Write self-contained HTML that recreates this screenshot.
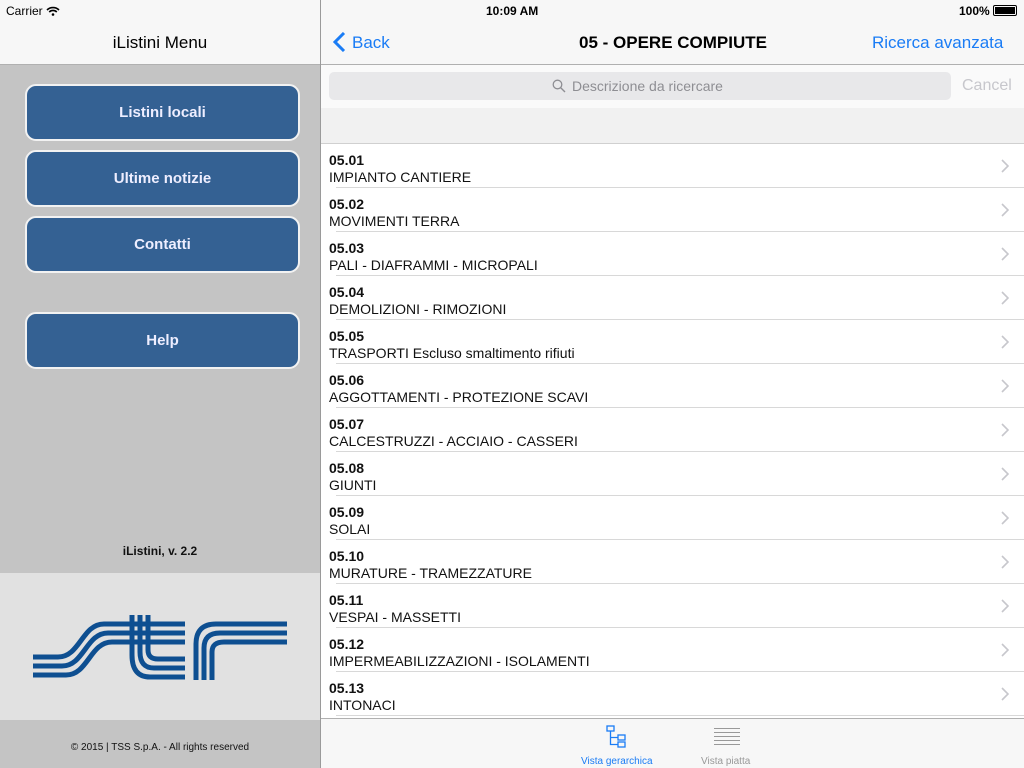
<!DOCTYPE html><html><head><style>
*{margin:0;padding:0;box-sizing:border-box}
body{width:1024px;height:768px;position:relative;overflow:hidden;font-family:"Liberation Sans",sans-serif;background:#fff}
.abs{position:absolute}
.btn{position:absolute;left:25px;width:275px;height:57px;background:#346193;border:2px solid #f2f2f2;border-radius:11px;color:#eef;font-weight:bold;font-size:15px;text-align:center;line-height:54px}
.row{position:absolute;left:320px;width:704px;height:44px}
.row b{position:absolute;left:9px;top:8px;font-size:14px;color:#111}
.row span{position:absolute;left:9px;top:25px;font-size:14px;color:#111}
.row i{position:absolute;left:16px;right:0;bottom:0;height:1px;background:#d8d8d8}
.row svg{position:absolute;right:15px;top:15px}
</style></head><body>
<div class="abs" style="left:0;top:0;width:320px;height:65px;background:#f7f7f7;border-bottom:1px solid #b0b0b0"></div>
<div class="abs" style="left:6px;top:4px;font-size:12px;color:#000">Carrier <svg width="14" height="10" viewBox="0 0 14 10" style="vertical-align:-1px"><path d="M1 4a8.5 8.5 0 0 1 12 0M3.2 6a5.5 5.5 0 0 1 7.6 0" stroke="#000" stroke-width="1.6" fill="none"/><circle cx="7" cy="8.5" r="1.3"/></svg></div>
<div class="abs" style="left:0;width:320px;top:33px;text-align:center;font-size:17px;color:#000">iListini Menu</div>
<div class="abs" style="left:0;top:65px;width:320px;height:508px;background:#c4c4c4"></div>
<div class="btn" style="top:84px">Listini locali</div>
<div class="btn" style="top:150px">Ultime notizie</div>
<div class="btn" style="top:216px">Contatti</div>
<div class="btn" style="top:312px">Help</div>
<div class="abs" style="left:0;width:320px;top:544px;text-align:center;font-size:12px;font-weight:bold;color:#111">iListini, v. 2.2</div>
<div class="abs" style="left:0;top:573px;width:320px;height:147px;background:#e1e1e1"></div>
<svg class="abs" style="left:0;top:573px" width="320" height="147" viewBox="0 573 320 147">
<g stroke="#0e4f91" stroke-width="5" fill="none">
<path d="M33 657H58C80 657 82 624 104 624H185"/>
<path d="M33 666H62C84 666 86 633 108 633H185"/>
<path d="M33 675H66C88 675 90 642 112 642H185"/>
<path d="M132 615V655Q132 677 150 677H185"/>
<path d="M140 615V652Q140 668 154 668H185"/>
<path d="M148 615V650Q148 659 158 659H185"/>
<path d="M196 680V644Q196 624 216 624H287"/>
<path d="M204 680V648Q204 633 220 633H287"/>
<path d="M212 680V652Q212 642 224 642H287"/>
</g></svg>
<div class="abs" style="left:0;top:720px;width:320px;height:48px;background:#c4c4c4"></div>
<div class="abs" style="left:0;width:320px;top:742px;text-align:center;font-size:10px;color:#111">© 2015 | TSS S.p.A. - All rights reserved</div>
<div class="abs" style="left:320px;top:0;width:1px;height:768px;background:#9a9a9a"></div>
<div class="abs" style="left:321px;top:0;width:703px;height:65px;background:#f7f7f7;border-bottom:1px solid #b0b0b0"></div>
<div class="abs" style="left:486px;top:4px;font-size:12px;font-weight:bold">10:09 AM</div>
<div class="abs" style="left:959px;top:4px;font-size:12px;font-weight:bold">100% <span style="display:inline-block;width:24px;height:11px;border:1px solid #000;border-radius:2px;padding:1px;vertical-align:-1px"><span style="display:block;height:100%;background:#000"></span></span></div>
<svg class="abs" style="left:333px;top:32px" width="14" height="20"><path d="M11 1L2 10l9 9" stroke="#1a7cf5" stroke-width="3" fill="none"/></svg>
<div class="abs" style="left:352px;top:33px;font-size:17px;color:#1a7cf5">Back</div>
<div class="abs" style="left:579px;top:33px;font-size:17px;font-weight:bold">05 - OPERE COMPIUTE</div>
<div class="abs" style="left:872px;top:33px;font-size:17px;color:#1a7cf5">Ricerca avanzata</div>
<div class="abs" style="left:321px;top:65px;width:703px;height:43px;background:#fafafa"></div>
<div class="abs" style="left:329px;top:72px;width:622px;height:28px;background:#e8e8ea;border-radius:5px"></div>
<svg class="abs" style="left:552px;top:79px" width="14" height="14"><circle cx="5.5" cy="5.5" r="4.3" stroke="#8e8e93" stroke-width="1.3" fill="none"/><path d="M8.6 8.6L13 13" stroke="#8e8e93" stroke-width="1.4"/></svg>
<div class="abs" style="left:572px;top:78px;font-size:14px;color:#8e8e93">Descrizione da ricercare</div>
<div class="abs" style="left:962px;top:77px;font-size:16px;color:#c7c7cc">Cancel</div>
<div class="abs" style="left:321px;top:108px;width:703px;height:36px;background:#f1f1f1;border-bottom:1px solid #d0d0d0"></div>
<div class="row" style="top:144px"><b>05.01</b><span>IMPIANTO CANTIERE</span><i></i><svg width="8" height="14"><path d="M1 1l6 6-6 6" stroke="#c7c7cc" stroke-width="1.6" fill="none"/></svg></div>
<div class="row" style="top:188px"><b>05.02</b><span>MOVIMENTI TERRA</span><i></i><svg width="8" height="14"><path d="M1 1l6 6-6 6" stroke="#c7c7cc" stroke-width="1.6" fill="none"/></svg></div>
<div class="row" style="top:232px"><b>05.03</b><span>PALI - DIAFRAMMI - MICROPALI</span><i></i><svg width="8" height="14"><path d="M1 1l6 6-6 6" stroke="#c7c7cc" stroke-width="1.6" fill="none"/></svg></div>
<div class="row" style="top:276px"><b>05.04</b><span>DEMOLIZIONI - RIMOZIONI</span><i></i><svg width="8" height="14"><path d="M1 1l6 6-6 6" stroke="#c7c7cc" stroke-width="1.6" fill="none"/></svg></div>
<div class="row" style="top:320px"><b>05.05</b><span>TRASPORTI Escluso smaltimento rifiuti</span><i></i><svg width="8" height="14"><path d="M1 1l6 6-6 6" stroke="#c7c7cc" stroke-width="1.6" fill="none"/></svg></div>
<div class="row" style="top:364px"><b>05.06</b><span>AGGOTTAMENTI - PROTEZIONE SCAVI</span><i></i><svg width="8" height="14"><path d="M1 1l6 6-6 6" stroke="#c7c7cc" stroke-width="1.6" fill="none"/></svg></div>
<div class="row" style="top:408px"><b>05.07</b><span>CALCESTRUZZI - ACCIAIO - CASSERI</span><i></i><svg width="8" height="14"><path d="M1 1l6 6-6 6" stroke="#c7c7cc" stroke-width="1.6" fill="none"/></svg></div>
<div class="row" style="top:452px"><b>05.08</b><span>GIUNTI</span><i></i><svg width="8" height="14"><path d="M1 1l6 6-6 6" stroke="#c7c7cc" stroke-width="1.6" fill="none"/></svg></div>
<div class="row" style="top:496px"><b>05.09</b><span>SOLAI</span><i></i><svg width="8" height="14"><path d="M1 1l6 6-6 6" stroke="#c7c7cc" stroke-width="1.6" fill="none"/></svg></div>
<div class="row" style="top:540px"><b>05.10</b><span>MURATURE - TRAMEZZATURE</span><i></i><svg width="8" height="14"><path d="M1 1l6 6-6 6" stroke="#c7c7cc" stroke-width="1.6" fill="none"/></svg></div>
<div class="row" style="top:584px"><b>05.11</b><span>VESPAI - MASSETTI</span><i></i><svg width="8" height="14"><path d="M1 1l6 6-6 6" stroke="#c7c7cc" stroke-width="1.6" fill="none"/></svg></div>
<div class="row" style="top:628px"><b>05.12</b><span>IMPERMEABILIZZAZIONI - ISOLAMENTI</span><i></i><svg width="8" height="14"><path d="M1 1l6 6-6 6" stroke="#c7c7cc" stroke-width="1.6" fill="none"/></svg></div>
<div class="row" style="top:672px"><b>05.13</b><span>INTONACI</span><i></i><svg width="8" height="14"><path d="M1 1l6 6-6 6" stroke="#c7c7cc" stroke-width="1.6" fill="none"/></svg></div>
<div class="abs" style="left:321px;top:718px;width:703px;height:50px;background:#f7f7f7;border-top:1px solid #b0b0b0"></div>
<svg class="abs" style="left:606px;top:725px" width="22" height="24"><g stroke="#1a7cf5" stroke-width="1.3" fill="none"><rect x="1" y="1" width="7" height="5"/><rect x="12" y="10" width="7" height="5"/><rect x="12" y="17" width="7" height="5"/><path d="M4.5 6v13.5H12M4.5 12.5H12"/></g></svg>
<div class="abs" style="left:581px;top:756px;font-size:10px;color:#1a7cf5">Vista gerarchica</div>
<svg class="abs" style="left:714px;top:727px" width="26" height="18"><g stroke="#999" stroke-width="1"><path d="M0 1.5h26M0 5.5h26M0 9.5h26M0 13.5h26M0 17.5h26"/></g></svg>
<div class="abs" style="left:701px;top:756px;font-size:10px;color:#999">Vista piatta</div>
</body></html>
